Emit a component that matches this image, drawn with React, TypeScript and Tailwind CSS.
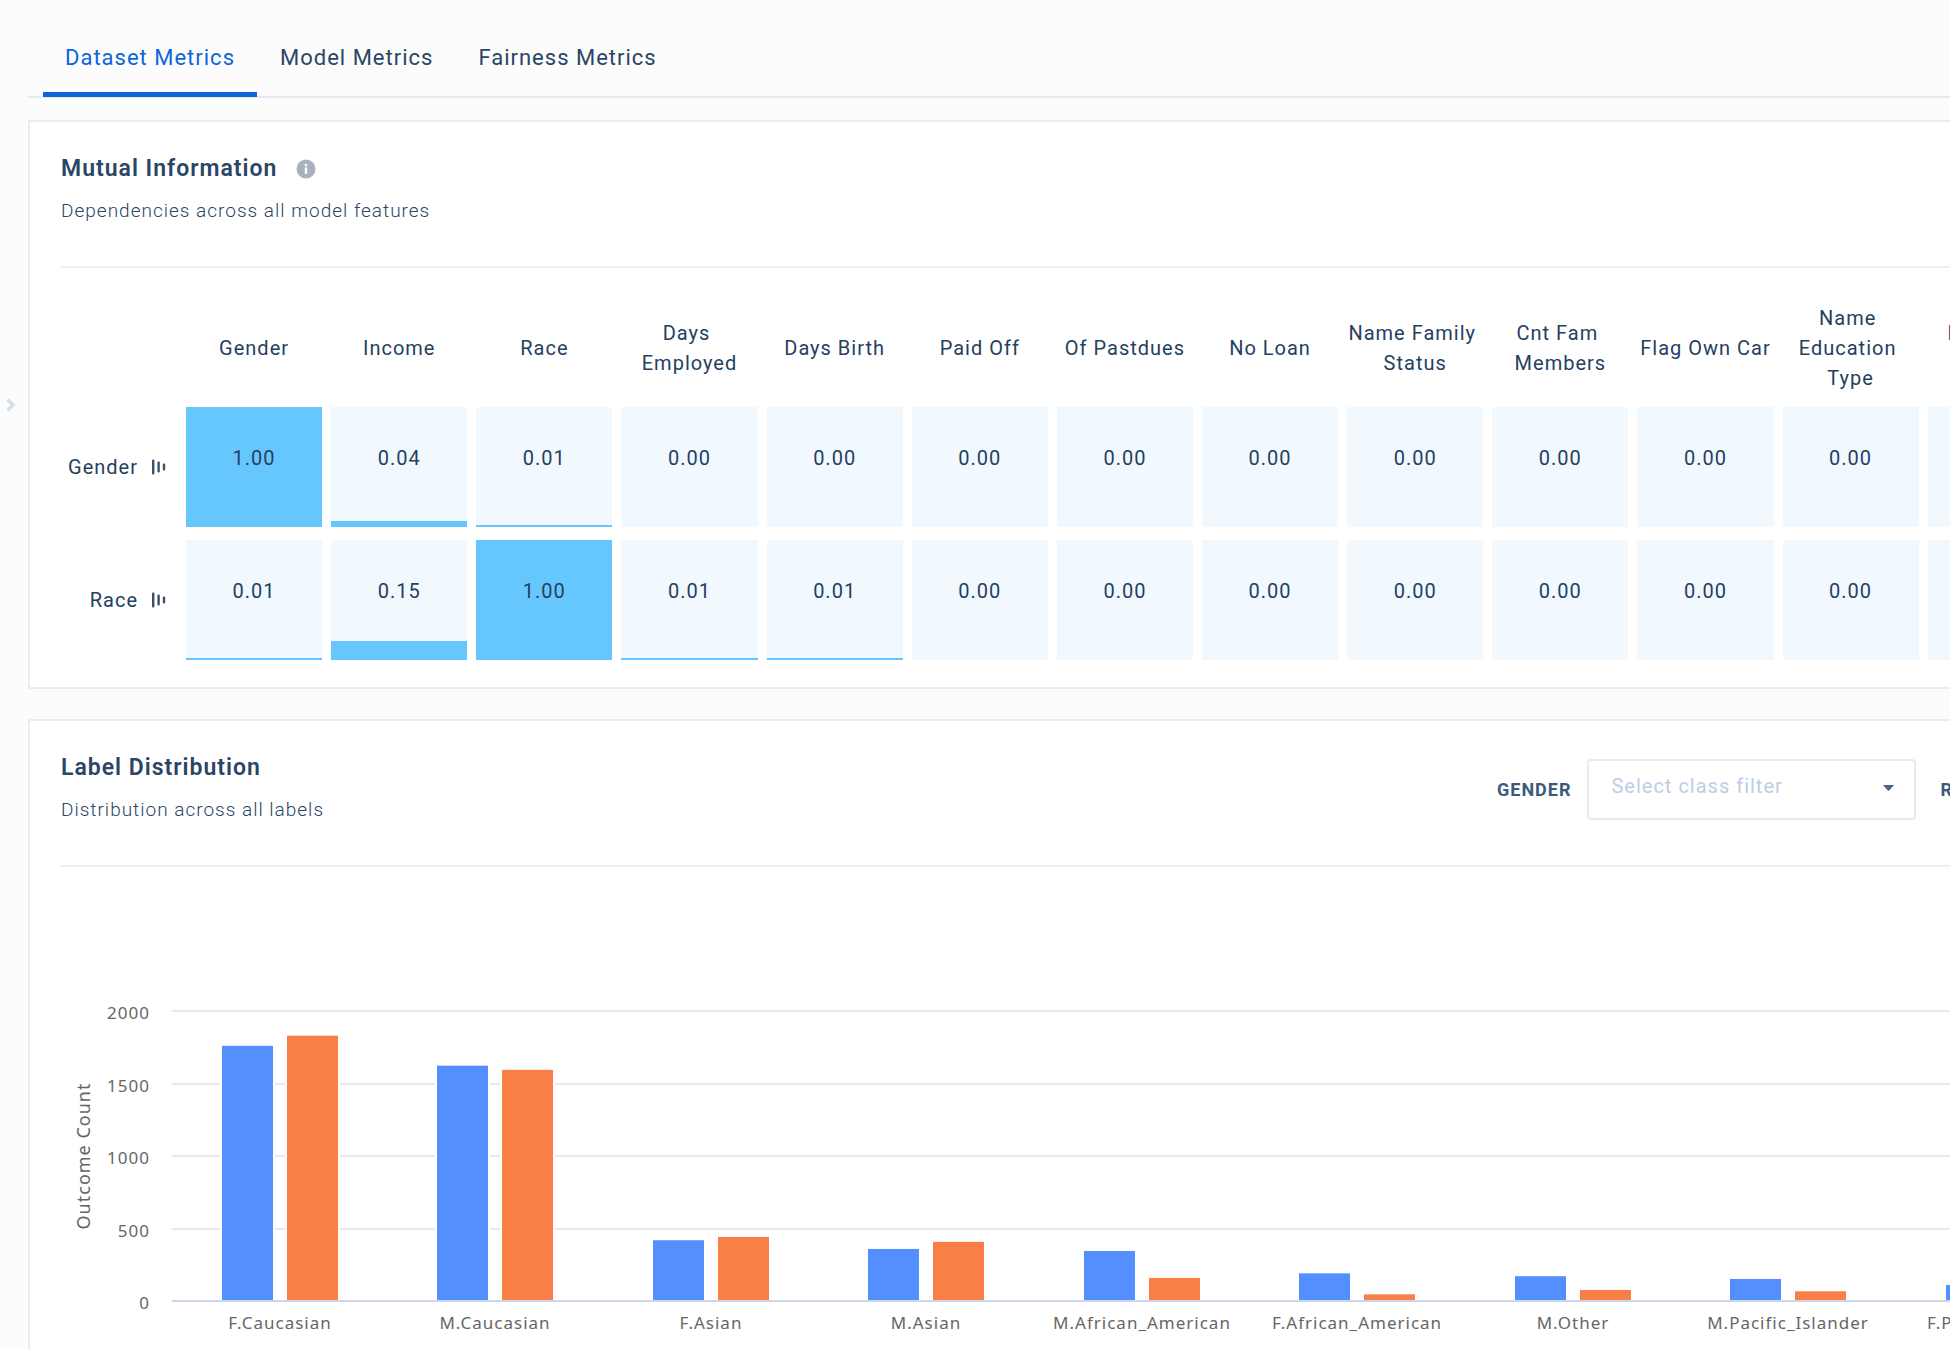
import React, { useState } from "react";

const TABS = ["Dataset Metrics", "Model Metrics", "Fairness Metrics"];

const FEATURES = [
    "Gender",
    "Income",
    "Race",
    "Days Employed",
    "Days Birth",
    "Paid Off",
    "Of Pastdues",
    "No Loan",
    "Name Family Status",
    "Cnt Fam Members",
    "Flag Own Car",
    "Name Education Type",
    "Flag Own Realty",
];

interface MatrixRow {
    name: string;
    values: number[];
}

const MATRIX: MatrixRow[] = [
    { name: "Gender", values: [1, 0.04, 0.01, 0, 0, 0, 0, 0, 0, 0, 0, 0, 0] },
    { name: "Race", values: [0.01, 0.15, 1, 0.01, 0.01, 0, 0, 0, 0, 0, 0, 0, 0] },
];

interface LabelCount {
    label: string;
    first: number;
    second: number;
}

const LABEL_COUNTS: LabelCount[] = [
    { label: "F.Caucasian", first: 1760, second: 1830 },
    { label: "M.Caucasian", first: 1623, second: 1594 },
    { label: "F.Asian", first: 419, second: 442 },
    { label: "M.Asian", first: 359, second: 408 },
    { label: "M.African_American", first: 345, second: 159 },
    { label: "F.African_American", first: 191, second: 46 },
    { label: "M.Other", first: 171, second: 76 },
    { label: "M.Pacific_Islander", first: 152, second: 67 },
    { label: "F.Pacific_Islander", first: 110, second: 60 },
];

const InfoIcon = () => (
    <svg width="20" height="20" viewBox="0 0 20 20" aria-hidden="true">
        <circle cx="10" cy="10" r="9.5" fill="#a7b2be" />
        <rect x="8.8" y="8.4" width="2.4" height="6.4" fill="#fff" />
        <rect x="8.8" y="5" width="2.4" height="2.2" fill="#fff" />
    </svg>
);

const SortIcon = () => (
    <svg className="shrink-0" width="14" height="16" viewBox="0 0 14 16" fill="#3a516d" aria-hidden="true">
        <rect x="0" y="0.5" width="2.4" height="15" rx="1" />
        <rect x="5.4" y="2.5" width="2.4" height="11" rx="1" />
        <rect x="10.8" y="4.5" width="2.4" height="7" rx="1" />
    </svg>
);

interface CardHeaderProps {
    title: string;
    subtitle: string;
    info?: boolean;
    children?: React.ReactNode;
}

const CardHeader: React.FC<CardHeaderProps> = ({ title, subtitle, info, children }) => (
    <div className="flex border-b-2 border-[#eceff7] pt-8 pb-10">
        <div className="flex flex-col gap-3">
            <div className="flex items-center gap-[19px]">
                <h2 className="text-[23px] leading-[30px] font-semibold text-[#2a4565]">{title}</h2>
                {info && (
                    <button type="button" aria-label="More information">
                        <InfoIcon />
                    </button>
                )}
            </div>
            <p className="text-[19px] leading-[30px] font-light text-[#2a4565]">{subtitle}</p>
        </div>
        {children}
    </div>
);

interface FilterProps {
    id: string;
    label: string;
}

const ClassFilter: React.FC<FilterProps> = ({ id, label }) => (
    <div className="flex shrink-0 items-center gap-4">
        <label htmlFor={id} className="text-lg font-bold text-[#3a5a7e]">
            {label}
        </label>
        <div className="relative">
            <select
                id={id}
                defaultValue=""
                className="h-[61px] w-[329px] appearance-none rounded-sm border-2 border-[#e6eaf4] bg-white pb-2 pl-[22px] text-xl text-[#bccee6]"
            >
                <option value="">Select class filter</option>
            </select>
            <svg
                className="pointer-events-none absolute top-[26px] right-[22px]"
                width="11"
                height="6"
                viewBox="0 0 11 6"
                aria-hidden="true"
            >
                <path d="M0 0h11L6.2 5.5q-.7.7-1.4 0z" fill="#4c6480" />
            </svg>
        </div>
    </div>
);

const MutualInformation = () => (
    <section className="overflow-hidden border-2 border-r-0 border-[#e9ecf7] bg-white pb-[14px] pl-[31px]">
        <CardHeader title="Mutual Information" subtitle="Dependencies across all model features" info />
        <table className="mt-[21px] w-[2012px] table-fixed border-separate border-spacing-x-[9px] border-spacing-y-[13px] text-xl leading-[30px] text-[#25405f]">
            <thead>
                <tr>
                    <td className="w-[107px]" />
                    {FEATURES.map((feature) => (
                        <th
                            key={feature}
                            scope="col"
                            className="h-[92px] p-0 text-center align-middle font-normal whitespace-break-spaces"
                        >
                            {feature}
                        </th>
                    ))}
                </tr>
            </thead>
            <tbody>
                {MATRIX.map((row) => (
                    <tr key={row.name}>
                        <th scope="row" className="p-0 pr-[11px] font-normal">
                            <div className="flex items-center justify-end gap-[14px]">
                                {row.name}
                                <SortIcon />
                            </div>
                        </th>
                        {row.values.map((value, i) => (
                            <td key={FEATURES[i]} className="p-0">
                                <div className="relative h-[120px] bg-[#f1f9ff] pt-9 text-center">
                                    <div
                                        className="absolute inset-x-0 bottom-0 bg-[#66c7ff]"
                                        style={{ height: Math.round(value > 0 ? 1 + value * 119 : 0) }}
                                    />
                                    <span className="relative">{value.toFixed(2)}</span>
                                </div>
                            </td>
                        ))}
                    </tr>
                ))}
            </tbody>
        </table>
    </section>
);

// chart geometry
const PLOT_LEFT = 111;
const PLOT_TOP = 144;
const PLOT_HEIGHT = 290;
const GROUP = 215.5;
const BAR = 51;

const LabelChart = () => {
    const baseline = PLOT_TOP + PLOT_HEIGHT;
    const middle = PLOT_TOP + PLOT_HEIGHT / 2;
    const toY = (count: number) => baseline - (count / 2000) * PLOT_HEIGHT;

    return (
        <svg
            width="2052"
            height="483"
            role="img"
            aria-label="Outcome count by label"
            className="max-w-none font-['Noto_Sans',sans-serif] text-[17px]"
            fill="#666"
        >
            {[0, 500, 1000, 1500, 2000].map((tick) => (
                <g key={tick}>
                    <rect x={PLOT_LEFT} y={Math.round(toY(tick)) - 1} width="1940" height="2" fill="#e9e9e9" />
                    <text x={PLOT_LEFT - 22} y={Math.round(toY(tick)) + 8} textAnchor="end">
                        {tick}
                    </text>
                </g>
            ))}
            <text x="29" y={middle} textAnchor="middle" transform={`rotate(-90 29 ${middle})`} className="text-lg">
                Outcome Count
            </text>
            {LABEL_COUNTS.map((item, i) => {
                const center = PLOT_LEFT + Math.round(GROUP * (i + 0.5));
                return (
                    <g key={item.label}>
                        <g stroke="#fff" strokeWidth="2">
                            <rect x={center - 59} y={toY(item.first) - 1} width={BAR + 2} height={baseline - toY(item.first) + 1} fill="#548fff" />
                            <rect x={center + 6} y={toY(item.second) - 1} width={BAR + 2} height={baseline - toY(item.second) + 1} fill="#fa7f46" />
                        </g>
                        <text x={center} y={baseline + 28} textAnchor="middle">
                            {item.label}
                        </text>
                    </g>
                );
            })}
            <rect x={PLOT_LEFT} y={baseline - 1} width="1940" height="2" fill="#ccd6eb" />
        </svg>
    );
};

const LabelDistribution = () => (
    <section className="overflow-hidden border-2 border-r-0 border-b-0 border-[#e9ecf7] bg-white pl-[31px]">
        <CardHeader title="Label Distribution" subtitle="Distribution across all labels">
            <div className="ml-auto flex w-[453px] items-start gap-6 pt-[6px]">
                <ClassFilter id="gender-filter" label="GENDER" />
                <ClassFilter id="race-filter" label="RACE" />
            </div>
        </CardHeader>
        <LabelChart />
    </section>
);

const App: React.FC = () => {
    const [activeTab, setActiveTab] = useState(TABS[0]);

    return (
        <div className="flex min-h-screen overflow-hidden bg-[#fcfcfc] font-[Roboto,sans-serif] tracking-[1px]">
            <aside className="w-7 shrink-0 pt-[395px]">
                <button type="button" aria-label="Open sidebar" className="flex h-5 w-[22px] items-center justify-center">
                    <svg width="10" height="14" viewBox="0 0 10 14" aria-hidden="true">
                        <path d="M1.5 1.5L7 7l-5.5 5.5" fill="none" stroke="#d5dfea" strokeWidth="3.4" />
                    </svg>
                </button>
            </aside>
            <main className="min-w-0 flex-1">
                <nav className="mb-[22px] flex gap-px border-b-2 border-[#e6ebf3] pl-[15px]">
                    {TABS.map((tab) => (
                        <button
                            key={tab}
                            type="button"
                            onClick={() => setActiveTab(tab)}
                            className={
                                tab === activeTab
                                    ? "-mb-px border-b-[5px] border-[#0d65d9] px-[22px] pt-11 pb-5 text-[22px] leading-7 text-[#0d65d9]"
                                    : "-mb-px border-b-[5px] border-transparent px-[22px] pt-11 pb-5 text-[22px] leading-7 text-[#2a4565]"
                            }
                        >
                            {tab}
                        </button>
                    ))}
                </nav>
                <div className="flex flex-col gap-[30px]">
                    <MutualInformation />
                    <LabelDistribution />
                </div>
            </main>
        </div>
    );
};

export default App;
